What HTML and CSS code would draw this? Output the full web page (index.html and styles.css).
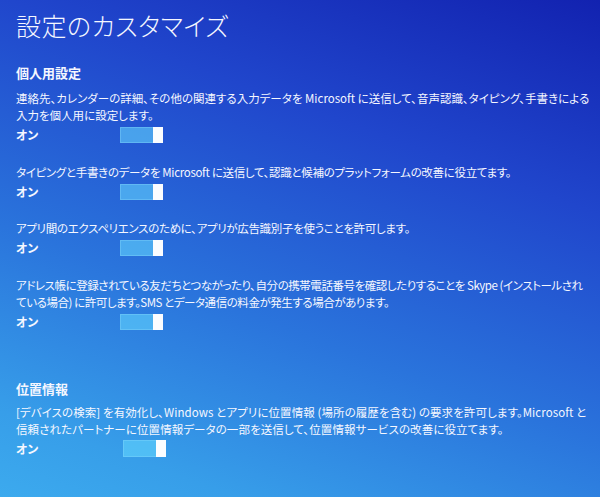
FILE: index.html
```html
<!DOCTYPE html>
<html lang="ja">
<head>
<meta charset="utf-8">
<title>設定のカスタマイズ</title>
<link rel="stylesheet" href="styles.css">
</head>
<body>
<main class="page">
  <h1 class="title">設定のカスタマイズ</h1>

  <section class="section">
    <h2 class="section-title">個人用設定</h2>
    <div class="item">
      <p class="desc desc-loose">連絡先、カレンダーの詳細、その他の関連する入力データを Microsoft に送信して、音声認識、タイピング、手書きによる<br>入力を個人用に設定します。</p>
      <div class="row"><span class="state">オン</span><span class="toggle"><span class="thumb"></span></span></div>
    </div>
    <div class="item">
      <p class="desc">タイピングと手書きのデータを Microsoft に送信して、認識と候補のプラットフォームの改善に役立てます。</p>
      <div class="row"><span class="state">オン</span><span class="toggle"><span class="thumb"></span></span></div>
    </div>
    <div class="item">
      <p class="desc">アプリ間のエクスペリエンスのために、アプリが広告識別子を使うことを許可します。</p>
      <div class="row"><span class="state">オン</span><span class="toggle"><span class="thumb"></span></span></div>
    </div>
    <div class="item">
      <p class="desc desc-tight">アドレス帳に登録されている友だちとつながったり、自分の携帯電話番号を確認したりすることを Skype (インストールされ<br>ている場合) に許可します。SMS とデータ通信の料金が発生する場合があります。</p>
      <div class="row"><span class="state">オン</span><span class="toggle"><span class="thumb"></span></span></div>
    </div>
  </section>

  <section class="section section-location">
    <h2 class="section-title">位置情報</h2>
    <div class="item">
      <p class="desc desc-mid">[デバイスの検索] を有効化し、Windows とアプリに位置情報 (場所の履歴を含む) の要求を許可します。Microsoft と<br>信頼されたパートナーに位置情報データの一部を送信して、位置情報サービスの改善に役立てます。</p>
      <div class="row"><span class="state">オン</span><span class="toggle toggle-low"><span class="thumb"></span></span></div>
    </div>
  </section>
</main>
</body>
</html>
```

FILE: styles.css
```css
html, body {
  margin: 0;
  height: 100%;
}

body {
  background: linear-gradient(200deg, #1222b0 0%, #2046cc 30%, #2a74dc 62%, #379ee9 88%, #3caaee 100%);
  color: #f5f7ff;
  font-family: "Noto Sans CJK JP", "Noto Sans", sans-serif;
  font-feature-settings: "palt";
  overflow: hidden;
}

.page {
  padding: 10px 0 0 16px;
}

.title {
  margin: 0;
  font-size: 25px;
  line-height: 30px;
  font-weight: 300;
  letter-spacing: 0.5px;
}

.section {
  margin-top: 24px;
}

.section-location {
  margin-top: 50px;
}

.section-title {
  margin: 0 0 9px;
  font-size: 13px;
  line-height: 17px;
  font-weight: 700;
}

.section-location .section-title {
  margin-bottom: 7px;
}

.item + .item {
  margin-top: 20.5px;
}

.desc {
  margin: 0;
  font-size: 11.5px;
  line-height: 17px;
  letter-spacing: -0.32px;
  white-space: nowrap;
}

.desc-loose {
  letter-spacing: 0;
}

.desc-tight {
  letter-spacing: -0.45px;
}

.desc-mid {
  letter-spacing: 0.08px;
}

.row {
  display: flex;
  align-items: center;
  margin-top: 3px;
  height: 16px;
}

.state {
  width: 104px;
  font-size: 12px;
  font-weight: 700;
  line-height: 16px;
}

.toggle {
  display: flex;
  justify-content: flex-end;
  width: 43px;
  height: 16px;
  background: rgba(100, 215, 255, 0.58);
  box-shadow: inset 0 0 0 1px rgba(140, 220, 255, 0.35);
}

.toggle-low {
  margin-left: 3px;
  height: 17px;
}

.thumb {
  width: 10px;
  height: 100%;
  background: #fbfdff;
}
```
